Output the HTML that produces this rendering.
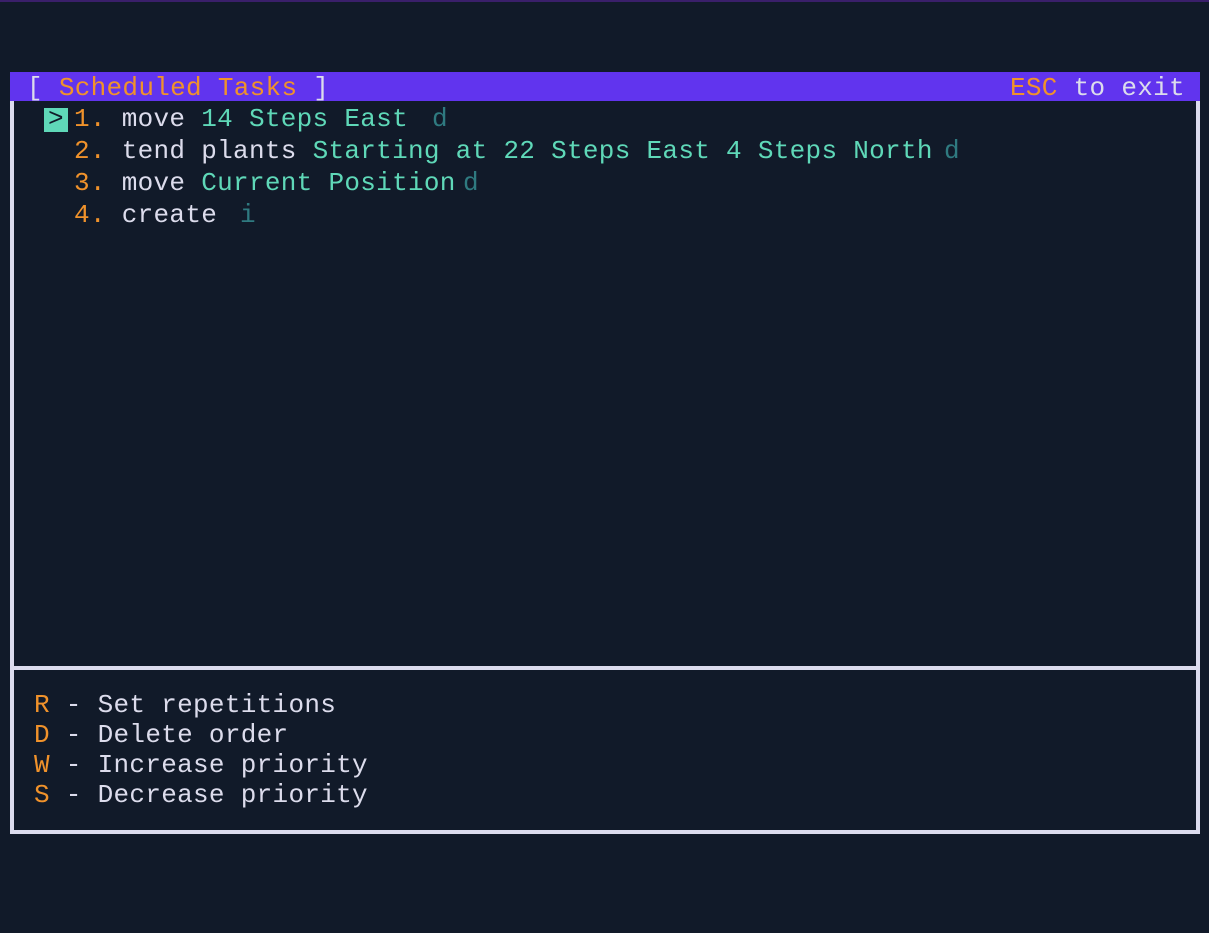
<!DOCTYPE html>
<html><head><meta charset="utf-8"><style>
html,body{margin:0;padding:0;}
body{width:1209px;height:933px;background:#111a29;position:relative;overflow:hidden;font-family:"Liberation Mono","DejaVu Sans Mono",monospace;font-size:26px;letter-spacing:0.3px;color:#dcdcec;}
.a{position:absolute;white-space:pre;line-height:32px;}
.o{color:#f0922b}.t{color:#5fd8b8}.d{color:#2f7a80}.w{color:#dcdcec}
.bar{position:absolute;left:10px;top:72px;width:1190px;height:29px;background:#6134ee;}
.ln{position:absolute;background:#dcdcee;}
</style></head><body>
<div style="position:absolute;left:0;top:0;width:1209px;height:2px;background:#3a1f6a"></div>
<div class="bar"></div>
<div class="ln" style="left:10px;top:101px;width:4px;height:733px"></div>
<div class="ln" style="left:1196px;top:101px;width:4px;height:733px"></div>
<div class="ln" style="left:10px;top:666px;width:1190px;height:4px"></div>
<div class="ln" style="left:10px;top:830px;width:1190px;height:4px"></div>
<div class="a" style="left:27px;top:72px"><span class="w">[ </span><span class="o">Scheduled Tasks</span><span class="w"> ]</span></div>
<div class="a" style="left:1010px;top:72px"><span class="o">ESC</span><span class="w"> to exit</span></div>
<div style="position:absolute;left:44px;top:108px;width:24px;height:24px;background:#5fd8b8"></div>
<div class="a" style="left:48px;top:103px;color:#111a29">&gt;</div>
<div class="a" style="left:74px;top:103px"><span class="o">1. </span><span class="w">move </span><span class="t">14 Steps East</span></div>
<div class="a d" style="left:432px;top:103px">d</div>
<div class="a" style="left:74px;top:135px"><span class="o">2. </span><span class="w">tend plants </span><span class="t">Starting at 22 Steps East 4 Steps North</span></div>
<div class="a d" style="left:944px;top:135px">d</div>
<div class="a" style="left:74px;top:167px"><span class="o">3. </span><span class="w">move </span><span class="t">Current Position</span></div>
<div class="a d" style="left:463px;top:167px">d</div>
<div class="a" style="left:74px;top:199px"><span class="o">4. </span><span class="w">create</span></div>
<div class="a d" style="left:240px;top:199px">i</div>
<div class="a" style="left:34px;top:690px;line-height:30px"><span class="o">R</span> - Set repetitions<br><span class="o">D</span> - Delete order<br><span class="o">W</span> - Increase priority<br><span class="o">S</span> - Decrease priority</div>
</body></html>
